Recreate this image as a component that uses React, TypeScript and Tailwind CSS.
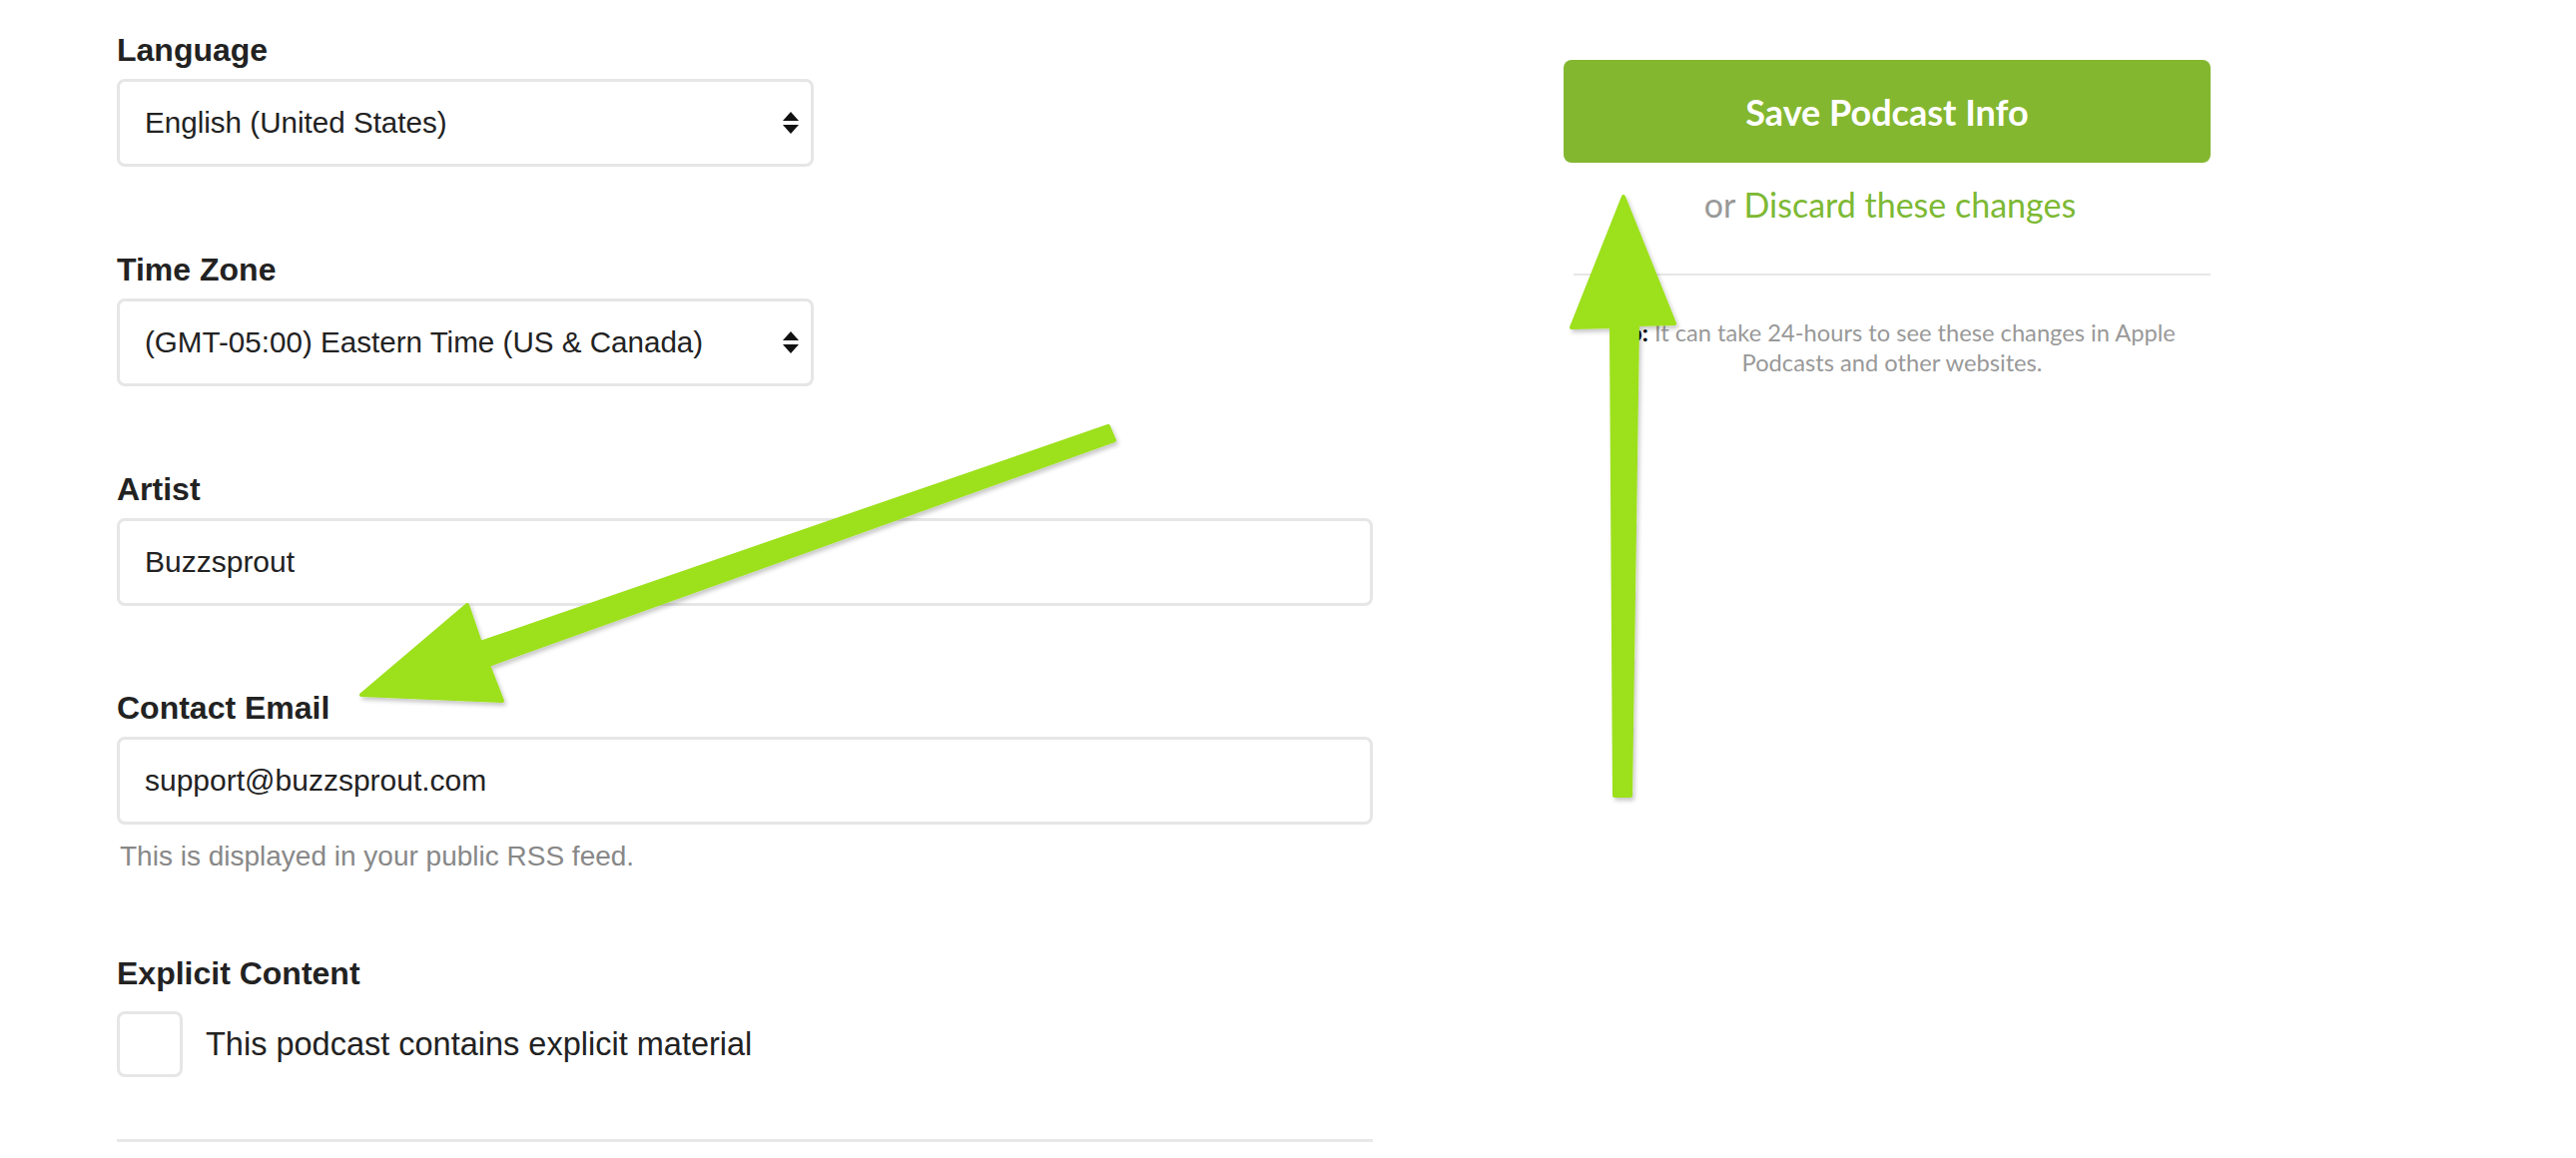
import React from 'react';

const SelectArrows = () => (
  <svg width="16" height="22" viewBox="0 0 16 22" className="shrink-0">
    <polygon points="0,9 8,0 16,9" fill="#111" />
    <polygon points="0,13 16,13 8,22" fill="#111" />
  </svg>
);

const Label = ({ children, className = '' }: { children: React.ReactNode; className?: string }) => (
  <div className={`text-[32px] leading-[32px] font-bold text-[#222] ${className}`}>{children}</div>
);

const SelectBox = ({ value }: { value: string }) => (
  <div className="mt-[13px] h-[88px] w-[698px] border-[3px] border-[#e6e6e6] rounded-[8px] bg-white flex items-center justify-between pl-[25px] pr-[12px]">
    <span className="text-[29.6px] leading-[30px] text-[#222]">{value}</span>
    <SelectArrows />
  </div>
);

const TextBox = ({ value }: { value: string }) => (
  <div className="mt-[13px] h-[88px] w-full border-[3px] border-[#e6e6e6] rounded-[8px] bg-white flex items-center pl-[25px]">
    <span className="text-[30px] leading-[30px] text-[#222]">{value}</span>
  </div>
);

const Arrows = () => (
  <svg width="2580" height="1160" viewBox="0 0 2580 1160" className="absolute left-0 top-0 pointer-events-none">
    <defs>
      <filter id="arrowShadow" x="-10%" y="-10%" width="120%" height="120%">
        <feDropShadow dx="2" dy="3" stdDeviation="2" floodColor="#000" floodOpacity="0.22" />
      </filter>
    </defs>
    <g fill="#9de01b" stroke="#9de01b" strokeWidth="4" strokeLinejoin="round" filter="url(#arrowShadow)">
      <polygon points="1110,427 481,644 468,606 362,696 503,702 489,666 1116,441" />
      <polygon points="1617,797 1614,327 1574,328 1626,197 1677,324 1640,325 1633,797" />
    </g>
  </svg>
);

export default function App() {
  return (
    <div className="relative w-[2580px] h-[1160px] bg-white overflow-hidden font-['Liberation_Sans',Arial,sans-serif]">
      <div className="flex pl-[117px]">
        {/* form fields */}
        <div className="w-[1258px] pt-[34px]">
          <Label>Language</Label>
          <SelectBox value="English (United States)" />

          <Label className="mt-[87px]">Time Zone</Label>
          <SelectBox value="(GMT-05:00) Eastern Time (US & Canada)" />

          <Label className="mt-[87px]">Artist</Label>
          <TextBox value="Buzzsprout" />

          <Label className="mt-[86px]">Contact Email</Label>
          <TextBox value="support@buzzsprout.com" />
          <div className="mt-[18px] ml-[3px] text-[28px] leading-[28px] text-[#888]">
            This is displayed in your public RSS feed.
          </div>

          <Label className="mt-[87px]">Explicit Content</Label>
          <div className="mt-[22px] flex items-center gap-[23px]">
            <div className="w-[66px] h-[66px] border-[3px] border-[#e6e6e6] rounded-[8px] bg-white" />
            <span className="text-[32.5px] leading-[32px] text-[#222]">This podcast contains explicit material</span>
          </div>

          <div className="mt-[62px] h-[3px] w-full bg-[#e8e8e8]" />
        </div>

        {/* save panel */}
        <div className="w-[648px] ml-[191px] pt-[60px] font-['Lato',sans-serif]">
          <button className="w-full h-[103px] rounded-[8px] bg-[#84b730] text-white text-[36px] font-bold leading-none">
            Save Podcast Info
          </button>
          <div className="mt-[25px] pl-[6px] text-center text-[34px] leading-[34px]">
            <span className="text-[#999]">or </span>
            <span className="text-[#7db934]">Discard these changes</span>
          </div>
          <div className="mt-[52px] ml-[10px] h-[2px] bg-[#e6e6e6]" />
          <p className="mt-[42px] pl-[35px] pr-[25px] text-center text-[23.7px] leading-[30px] text-[#999]">
            <b className="text-black">Tip:</b> It can take 24-hours to see these changes in Apple Podcasts and other websites.
          </p>
        </div>
      </div>

      <Arrows />
    </div>
  );
}
